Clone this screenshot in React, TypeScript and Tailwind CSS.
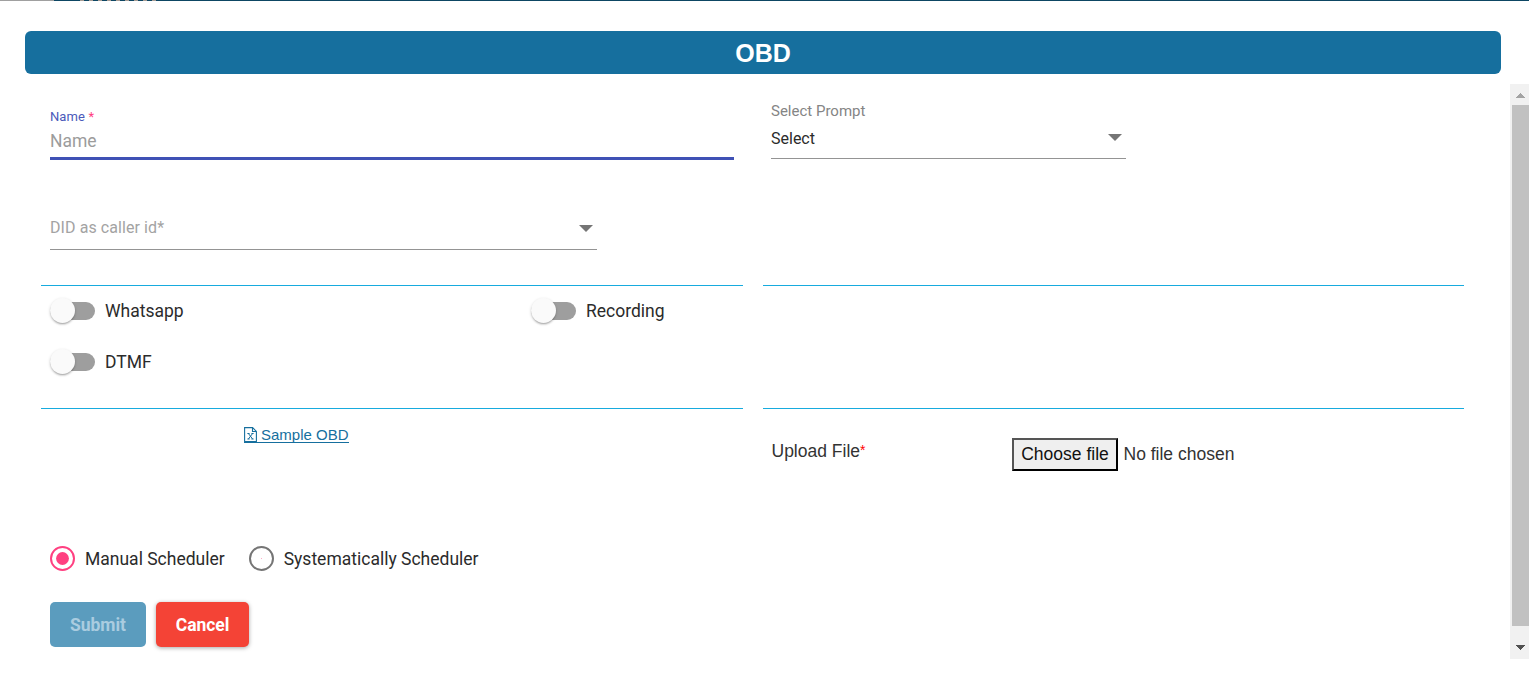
import React from "react";

function Caret() {
  return (
    <svg width="14" height="7" viewBox="0 0 14 7" className="block">
      <path d="M0 0h14L7 7z" fill="#757575" />
    </svg>
  );
}

function Toggle({ label }: { label: string }) {
  return (
    <label className="flex h-[25px] items-center">
      <span className="flex h-[18px] w-[45px] items-center rounded-full bg-[#9e9e9e]">
        <span className="h-[25px] w-[25px] shrink-0 rounded-full bg-[#fafafa] shadow-[0_2px_2px_-1px_rgba(0,0,0,0.25),0_1px_3px_0_rgba(0,0,0,0.18)]" />
      </span>
      <span className="ml-[10px] pt-[2px] text-[17.5px] leading-[25px] whitespace-nowrap">{label}</span>
    </label>
  );
}

function Radio({ label, checked = false }: { label: string; checked?: boolean }) {
  return (
    <label className="flex h-[25px] items-center">
      <svg width="25" height="25" viewBox="0 0 25 25">
        <circle cx="12.5" cy="12.5" r="11.5" fill="none" strokeWidth="2" stroke={checked ? "#ff4081" : "#757575"} />
        <circle cx="12.5" cy="12.5" r={checked ? 6.4 : 0.4} fill="#ff4081" />
      </svg>
      <span className="ml-[10px] pt-[2px] text-[17.5px] leading-[25px] whitespace-nowrap">{label}</span>
    </label>
  );
}

function Divider() {
  return (
    <div className="flex gap-5">
      <div className="h-px w-[702px] bg-[#17abde]" />
      <div className="h-px w-[701px] bg-[#17abde]" />
    </div>
  );
}

function Scrollbar() {
  return (
    <div className="flex h-[575px] w-[19px] shrink-0 flex-col items-end bg-[#f1f1f1]">
      <div className="flex h-[21px] w-[17px] items-start justify-center pt-[9px]">
        <svg width="9" height="5" viewBox="0 0 9 5" shapeRendering="crispEdges" className="block">
          <path d="M4.5 0L9 5H0z" fill="#a3a3a3" />
        </svg>
      </div>
      <div className="h-[521px] w-[17px] bg-[#c1c1c1]" />
      <div className="flex h-[33px] w-[17px] items-start justify-center pt-[19px]">
        <svg width="9" height="5" viewBox="0 0 9 5" shapeRendering="crispEdges" className="block">
          <path d="M0 0h9L4.5 5z" fill="#505050" />
        </svg>
      </div>
    </div>
  );
}

export default function App() {
  return (
    <div className="flex h-[689px] w-[1529px] flex-col overflow-hidden bg-white font-['Roboto',sans-serif] text-[#2b2b2b]">
      <div className="flex h-px shrink-0">
        <div className="w-[54px] bg-[#a0a0a0]" />
        <div className="w-[26px] bg-[#0d4663]" />
        <div className="w-[78px] bg-[repeating-linear-gradient(90deg,#a89c94_0_4px,#0d4663_4px_9px)]" />
        <div className="flex-1 bg-[#0d4663]" />
      </div>
      <h1 className="mt-[30px] ml-[25px] h-[43px] w-[1476px] shrink-0 rounded-[6px] bg-[#166f9e] text-center font-['Liberation_Sans',sans-serif] text-[25px] leading-[45px] font-bold text-white">
        OBD
      </h1>
      <div className="mt-[10px] flex">
        <main className="flex h-[575px] w-[1510px] flex-col pl-[41px]">
          <section className="flex h-[76px] pl-[9px]">
            <div className="flex w-[684px] flex-col border-b-[3px] border-[#3f51b5] pt-[25px]">
              <span className="h-4 text-[13px] leading-4 tracking-[0.1px] text-[#4a5aba]">
                Name <span className="text-[#ff4081]">*</span>
              </span>
              <span className="mt-[4px] text-[17.5px] leading-[25px] text-[#9c9c9c]">Name</span>
            </div>
            <div className="ml-[37px] flex h-[75px] w-[355px] flex-col border-b border-[#949494] pt-[17px]">
              <span className="h-5 text-[15px] leading-5 text-[#858585]">Select Prompt</span>
              <div className="mt-[7px] flex h-5 items-start justify-between pr-1">
                <span className="mt-px text-[16px] leading-5">Select</span>
                <span className="mt-[6px]"><Caret /></span>
              </div>
            </div>
          </section>
          <section className="mt-[55px] ml-[9px] flex h-[35px] w-[547px] items-start justify-between border-b border-[#949494] pr-1">
            <span className="mt-[3px] text-[16px] leading-5 tracking-[0.08px] text-[#a3a3a3]">DID as caller id*</span>
            <span className="mt-[10px]"><Caret /></span>
          </section>
          <div className="mt-[35px]"><Divider /></div>
          <section className="mt-3 grid grid-cols-[481px_1fr] gap-y-[26px] pl-[9px]">
            <Toggle label="Whatsapp" />
            <Toggle label="Recording" />
            <Toggle label="DTMF" />
          </section>
          <div className="mt-[34px]"><Divider /></div>
          <section className="flex h-[137px] font-['Liberation_Sans',sans-serif]">
            <div className="w-[730px] pt-[16px] pl-[203px]">
              <a className="inline-flex h-[18px] items-start border-b border-[#166f9e] text-[15px] leading-[20px] text-[#166f9e]">
                <svg width="13" height="16" viewBox="0 0 13 16" fill="none" stroke="currentColor" className="mt-[2px] mr-1 block">
                  <path d="M.6 .6h8L12.4 4.4V14.5H.6z M8.5 .6v3.9h3.9" strokeWidth="1.1" />
                  <path d="M4.4 6.5l4.2 5.5M8.6 6.5L4.4 12M3.4 6.5h2.2M7.4 6.5h2.2M3.4 12h2.2M7.4 12h2.2" strokeWidth="1" />
                </svg>
                Sample OBD
              </a>
            </div>
            <div className="w-[241px] pt-[30px] pl-[0.5px] text-[17.5px] leading-6 text-[#333]">
              Upload File<span className="align-[2px] text-[14px] leading-none text-[#ff0000]">*</span>
            </div>
            <div className="mt-[29px] flex h-[33px] items-center text-[17.5px]">
              <button className="h-[33px] w-[106px] border-2 border-t-[#555] border-l-[#555] border-r-black border-b-black bg-[#efefef] text-[17.5px] leading-[29px] whitespace-nowrap text-[#111]">
                Choose file
              </button>
              <span className="ml-[5.5px] text-[#333]">No file chosen</span>
            </div>
          </section>
          <section className="flex gap-6 pl-[9px]">
            <Radio label="Manual Scheduler" checked />
            <Radio label="Systematically Scheduler" />
          </section>
          <section className="mt-[31px] flex gap-[10px] pl-[9px] text-[17.5px] leading-[45px] font-bold tracking-[-0.05px]">
            <button className="h-[45px] w-[96px] rounded-[5px] bg-[#5b9cbe] pt-[2px] leading-[43px] text-[#aacce0]">Submit</button>
            <button className="h-[45px] w-[93px] rounded-[5px] bg-[#f44336] pt-[2px] leading-[43px] text-white shadow-[0_1px_4px_rgba(0,0,0,0.35)]">Cancel</button>
          </section>
        </main>
        <Scrollbar />
      </div>
    </div>
  );
}
